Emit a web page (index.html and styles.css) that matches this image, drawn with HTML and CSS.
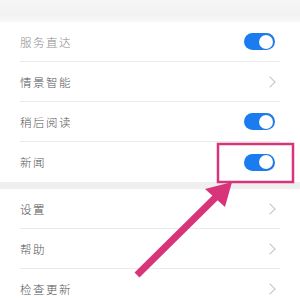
FILE: index.html
```html
<!DOCTYPE html>
<html lang="zh">
<head>
<meta charset="utf-8">
<link rel="stylesheet" href="styles.css">
</head>
<body>
<div class="page">
  <div class="band band-top"></div>
  <div class="group">
    <div class="row"><span class="label dim">服务直达</span><span class="toggle"><span class="knob"></span></span></div>
    <div class="row"><span class="label">情景智能</span><span class="chev"></span></div>
    <div class="row"><span class="label">稍后阅读</span><span class="toggle"><span class="knob"></span></span></div>
    <div class="row last"><span class="label">新闻</span><span class="toggle"><span class="knob"></span></span></div>
  </div>
  <div class="band band-mid"></div>
  <div class="group">
    <div class="row"><span class="label">设置</span><span class="chev"></span></div>
    <div class="row"><span class="label">帮助</span><span class="chev"></span></div>
    <div class="row last"><span class="label">检查更新</span><span class="chev"></span></div>
  </div>
  <svg class="annot" width="300" height="300" viewBox="0 0 300 300">
    <rect x="218" y="144" width="75" height="38" fill="none" stroke="#d8347a" stroke-width="2.5"/>
    <line x1="137" y1="275" x2="218" y2="195" stroke="#d8347a" stroke-width="7"/>
    <polygon points="232,182 225,207 205,189" fill="#d8347a"/>
  </svg>
</div>
</body>
</html>
```

FILE: styles.css
```css
* { box-sizing: border-box; }
html, body { margin: 0; padding: 0; background: #fff; }
.page {
  position: relative;
  width: 300px;
  height: 300px;
  overflow: hidden;
  font-family: "Noto Sans CJK SC", "Noto Sans", sans-serif;
}
.band-top { height: 22px; background: linear-gradient(#f6f6f6, #f2f2f2 70%, #f8f8f8); }
.band-mid { height: 7px; background: #efefef; }
.row {
  display: flex;
  align-items: center;
  justify-content: space-between;
  height: 40px;
  margin: 0 20px;
  padding-right: 5px;
  border-bottom: 1px solid #e9e9e9;
}
.row.last { border-bottom: none; }
.label {
  font-size: 11.5px;
  font-weight: 300;
  letter-spacing: 1.5px;
  color: #555;
}
.label.dim { color: #8a8a8a; }
.toggle {
  width: 31px;
  height: 17px;
  border-radius: 9px;
  background: #1b7cf0;
  display: flex;
  align-items: center;
  justify-content: flex-end;
  padding-right: 2px;
}
.knob {
  width: 14px;
  height: 14px;
  border-radius: 50%;
  background: #fff;
  box-shadow: 0 0 1px rgba(0,0,0,0.3);
}
.chev {
  width: 8px;
  height: 8px;
  border-top: 1.2px solid #c4c4c4;
  border-right: 1.2px solid #c4c4c4;
  transform: rotate(45deg);
  margin-right: 1px;
}
.annot { position: absolute; left: 0; top: 0; }
```
